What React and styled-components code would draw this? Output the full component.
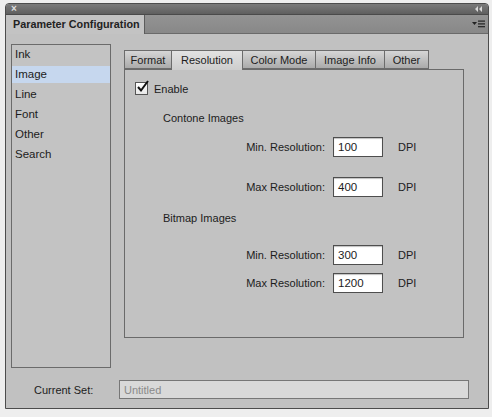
import React from "react";
import styled, { createGlobalStyle } from "styled-components";

const Global = createGlobalStyle`
  body {
    margin: 0;
    background: #eeeeee;
    font-family: "Liberation Sans", Arial, sans-serif;
    font-size: 11px;
    color: #1c1c1c;
  }
`;

const Window = styled.div`
  margin: 3px 0 0 5px;
  width: 482px;
  border: 1px solid #4c4c4c;
  border-radius: 4px 4px 0 0;
  overflow: hidden;
  background: #c1c1c1;
`;

const TitleStrip = styled.div`
  height: 10px;
  background: linear-gradient(#7a7a7a, #5f5f5f);
  display: flex;
  align-items: center;
  justify-content: space-between;
  padding: 0 6px 0 5px;
  color: #dedede;
  border-bottom: 1px solid #4a4a4a;
`;

const CloseGlyph = styled.span`
  font-size: 10px;
  line-height: 10px;
  font-weight: bold;
`;

const TabStrip = styled.div`
  height: 18px;
  display: flex;
  background: linear-gradient(#939393, #888888);
  border-bottom: 1px solid #6a6a6a;
`;

const PanelTab = styled.div`
  width: 139px;
  padding-left: 7px;
  box-sizing: border-box;
  background: #c3c3c3;
  border-right: 1px solid #5c5c5c;
  margin-bottom: -1px;
  font-weight: bold;
  font-size: 10.8px;
  white-space: nowrap;
  line-height: 18px;
  color: #222;
`;

const MenuBtn = styled.div`
  margin-left: auto;
  display: flex;
  align-items: center;
  padding-right: 3px;
`;

const Body = styled.div`
  padding: 10px 0 9px 5px;
`;

const MainRow = styled.div`
  display: flex;
  gap: 13px;
  height: 324px;
`;

const List = styled.div`
  width: 98px;
  border: 1px solid #6b6b6b;
  padding-top: 1px;
  background: #c3c3c3;
`;

const ListItem = styled.div`
  height: 17px;
  line-height: 17px;
  margin-bottom: 3px;
  padding-left: 3px;
  font-size: 11.5px;
  background: ${(p) => (p.$selected ? "#c6d7ee" : "transparent")};
`;

const Right = styled.div`
  display: flex;
  flex-direction: column;
  padding-top: 6px;
`;

const Tabs = styled.div`
  display: flex;
  height: 19px;
`;

const Tab = styled.div`
  width: ${(p) => p.$w}px;
  box-sizing: border-box;
  border: 1px solid #6c6c6c;
  border-left: ${(p) => (p.$first ? "1px solid #6c6c6c" : "none")};
  border-bottom: ${(p) => (p.$active ? "none" : "1px solid #6c6c6c")};
  background: ${(p) =>
    p.$active
      ? "linear-gradient(#e2e2e2, #cdcdcd)"
      : "linear-gradient(#d6d6d6, #ababab)"};
  text-align: center;
  line-height: 18px;
  font-size: 11px;
  position: relative;
  z-index: 1;
  margin-bottom: ${(p) => (p.$active ? "-1px" : "0")};
  height: ${(p) => (p.$active ? "20px" : "19px")};
`;

const Content = styled.div`
  width: 340px;
  height: 269px;
  box-sizing: border-box;
  border: 1px solid #6a6a6a;
  background: #c2c2c2;
  display: flex;
  flex-direction: column;
`;

const CheckRow = styled.div`
  display: flex;
  align-items: center;
  gap: 6px;
  margin: 12px 0 0 10px;
  height: 13px;
  font-size: 11px;
`;

const CheckBox = styled.div`
  width: 11px;
  height: 11px;
  border: 1px solid #555;
  background: linear-gradient(#ffffff, #e8e8e8);
  position: relative;
`;

const Heading = styled.div`
  margin: ${(p) => p.$mt}px 0 0 38px;
  height: 14px;
  line-height: 14px;
  font-size: 11px;
`;

const FieldRow = styled.div`
  display: flex;
  align-items: center;
  height: 20px;
  margin-top: ${(p) => p.$mt}px;
`;

const FieldLabel = styled.div`
  width: 200px;
  text-align: right;
  font-size: 11px;
`;

const NumInput = styled.div`
  width: 50px;
  height: 20px;
  box-sizing: border-box;
  margin-left: 8px;
  border: 1px solid #4e4e4e;
  background: #ffffff;
  box-shadow: inset 0 1px 1px rgba(0, 0, 0, 0.25);
  padding-left: 4px;
  line-height: 19px;
  font-size: 11.5px;
`;

const Unit = styled.div`
  margin-left: 15px;
  font-size: 11px;
`;

const Footer = styled.div`
  display: flex;
  align-items: center;
  margin-top: 12px;
  height: 19px;
`;

const FooterLabel = styled.div`
  width: 85px;
  margin-left: 23px;
  font-size: 11px;
`;

const SetInput = styled.div`
  width: 350px;
  height: 19px;
  box-sizing: border-box;
  border: 1px solid #777;
  background: #d9d9d9;
  color: #8a8a8a;
  padding-left: 4px;
  line-height: 18px;
  font-size: 11px;
`;

const fields = [
  { heading: "Contone Images", rows: [["Min. Resolution:", "100"], ["Max Resolution:", "400"]] },
  { heading: "Bitmap Images", rows: [["Min. Resolution:", "300"], ["Max Resolution:", "1200"]] },
];

export default function App() {
  return (
    <>
      <Global />
      <Window>
        <TitleStrip>
          <CloseGlyph>×</CloseGlyph>
          <svg width="7" height="6" viewBox="0 0 7 6">
            <path d="M3 0 L0 3 L3 6 Z M7 0 L4 3 L7 6 Z" fill="#d8d8d8" />
          </svg>
        </TitleStrip>
        <TabStrip>
          <PanelTab>Parameter Configuration</PanelTab>
          <MenuBtn>
            <svg width="13" height="8" viewBox="0 0 13 8">
              <path d="M0 2 L5 2 L2.5 5 Z" fill="#222" />
              <rect x="6" y="0.5" width="7" height="1.2" fill="#222" />
              <rect x="6" y="3.3" width="7" height="1.2" fill="#222" />
              <rect x="6" y="6.1" width="7" height="1.2" fill="#222" />
            </svg>
          </MenuBtn>
        </TabStrip>
        <Body>
          <MainRow>
            <List>
              {["Ink", "Image", "Line", "Font", "Other", "Search"].map((t) => (
                <ListItem key={t} $selected={t === "Image"}>{t}</ListItem>
              ))}
            </List>
            <Right>
              <Tabs>
                <Tab $w={48} $first>Format</Tab>
                <Tab $w={71} $active>Resolution</Tab>
                <Tab $w={73}>Color Mode</Tab>
                <Tab $w={69}>Image Info</Tab>
                <Tab $w={44}>Other</Tab>
              </Tabs>
              <Content>
                <CheckRow>
                  <CheckBox>
                    <svg width="14" height="14" viewBox="0 0 14 14" style={{ position: "absolute", left: 0, top: -3 }}>
                      <path d="M2 7 L5 10.5 L12 1" stroke="#111" strokeWidth="2" fill="none" />
                    </svg>
                  </CheckBox>
                  Enable
                </CheckRow>
                {fields.map((g, gi) => (
                  <React.Fragment key={g.heading}>
                    <Heading $mt={gi === 0 ? 16 : 14}>{g.heading}</Heading>
                    {g.rows.map(([label, value], ri) => (
                      <FieldRow key={ri} $mt={gi === 0 ? (ri === 0 ? 12 : 20) : (ri === 0 ? 20 : 8)}>
                        <FieldLabel>{label}</FieldLabel>
                        <NumInput>{value}</NumInput>
                        <Unit>DPI</Unit>
                      </FieldRow>
                    ))}
                  </React.Fragment>
                ))}
              </Content>
            </Right>
          </MainRow>
          <Footer>
            <FooterLabel>Current Set:</FooterLabel>
            <SetInput>Untitled</SetInput>
          </Footer>
        </Body>
      </Window>
    </>
  );
}
